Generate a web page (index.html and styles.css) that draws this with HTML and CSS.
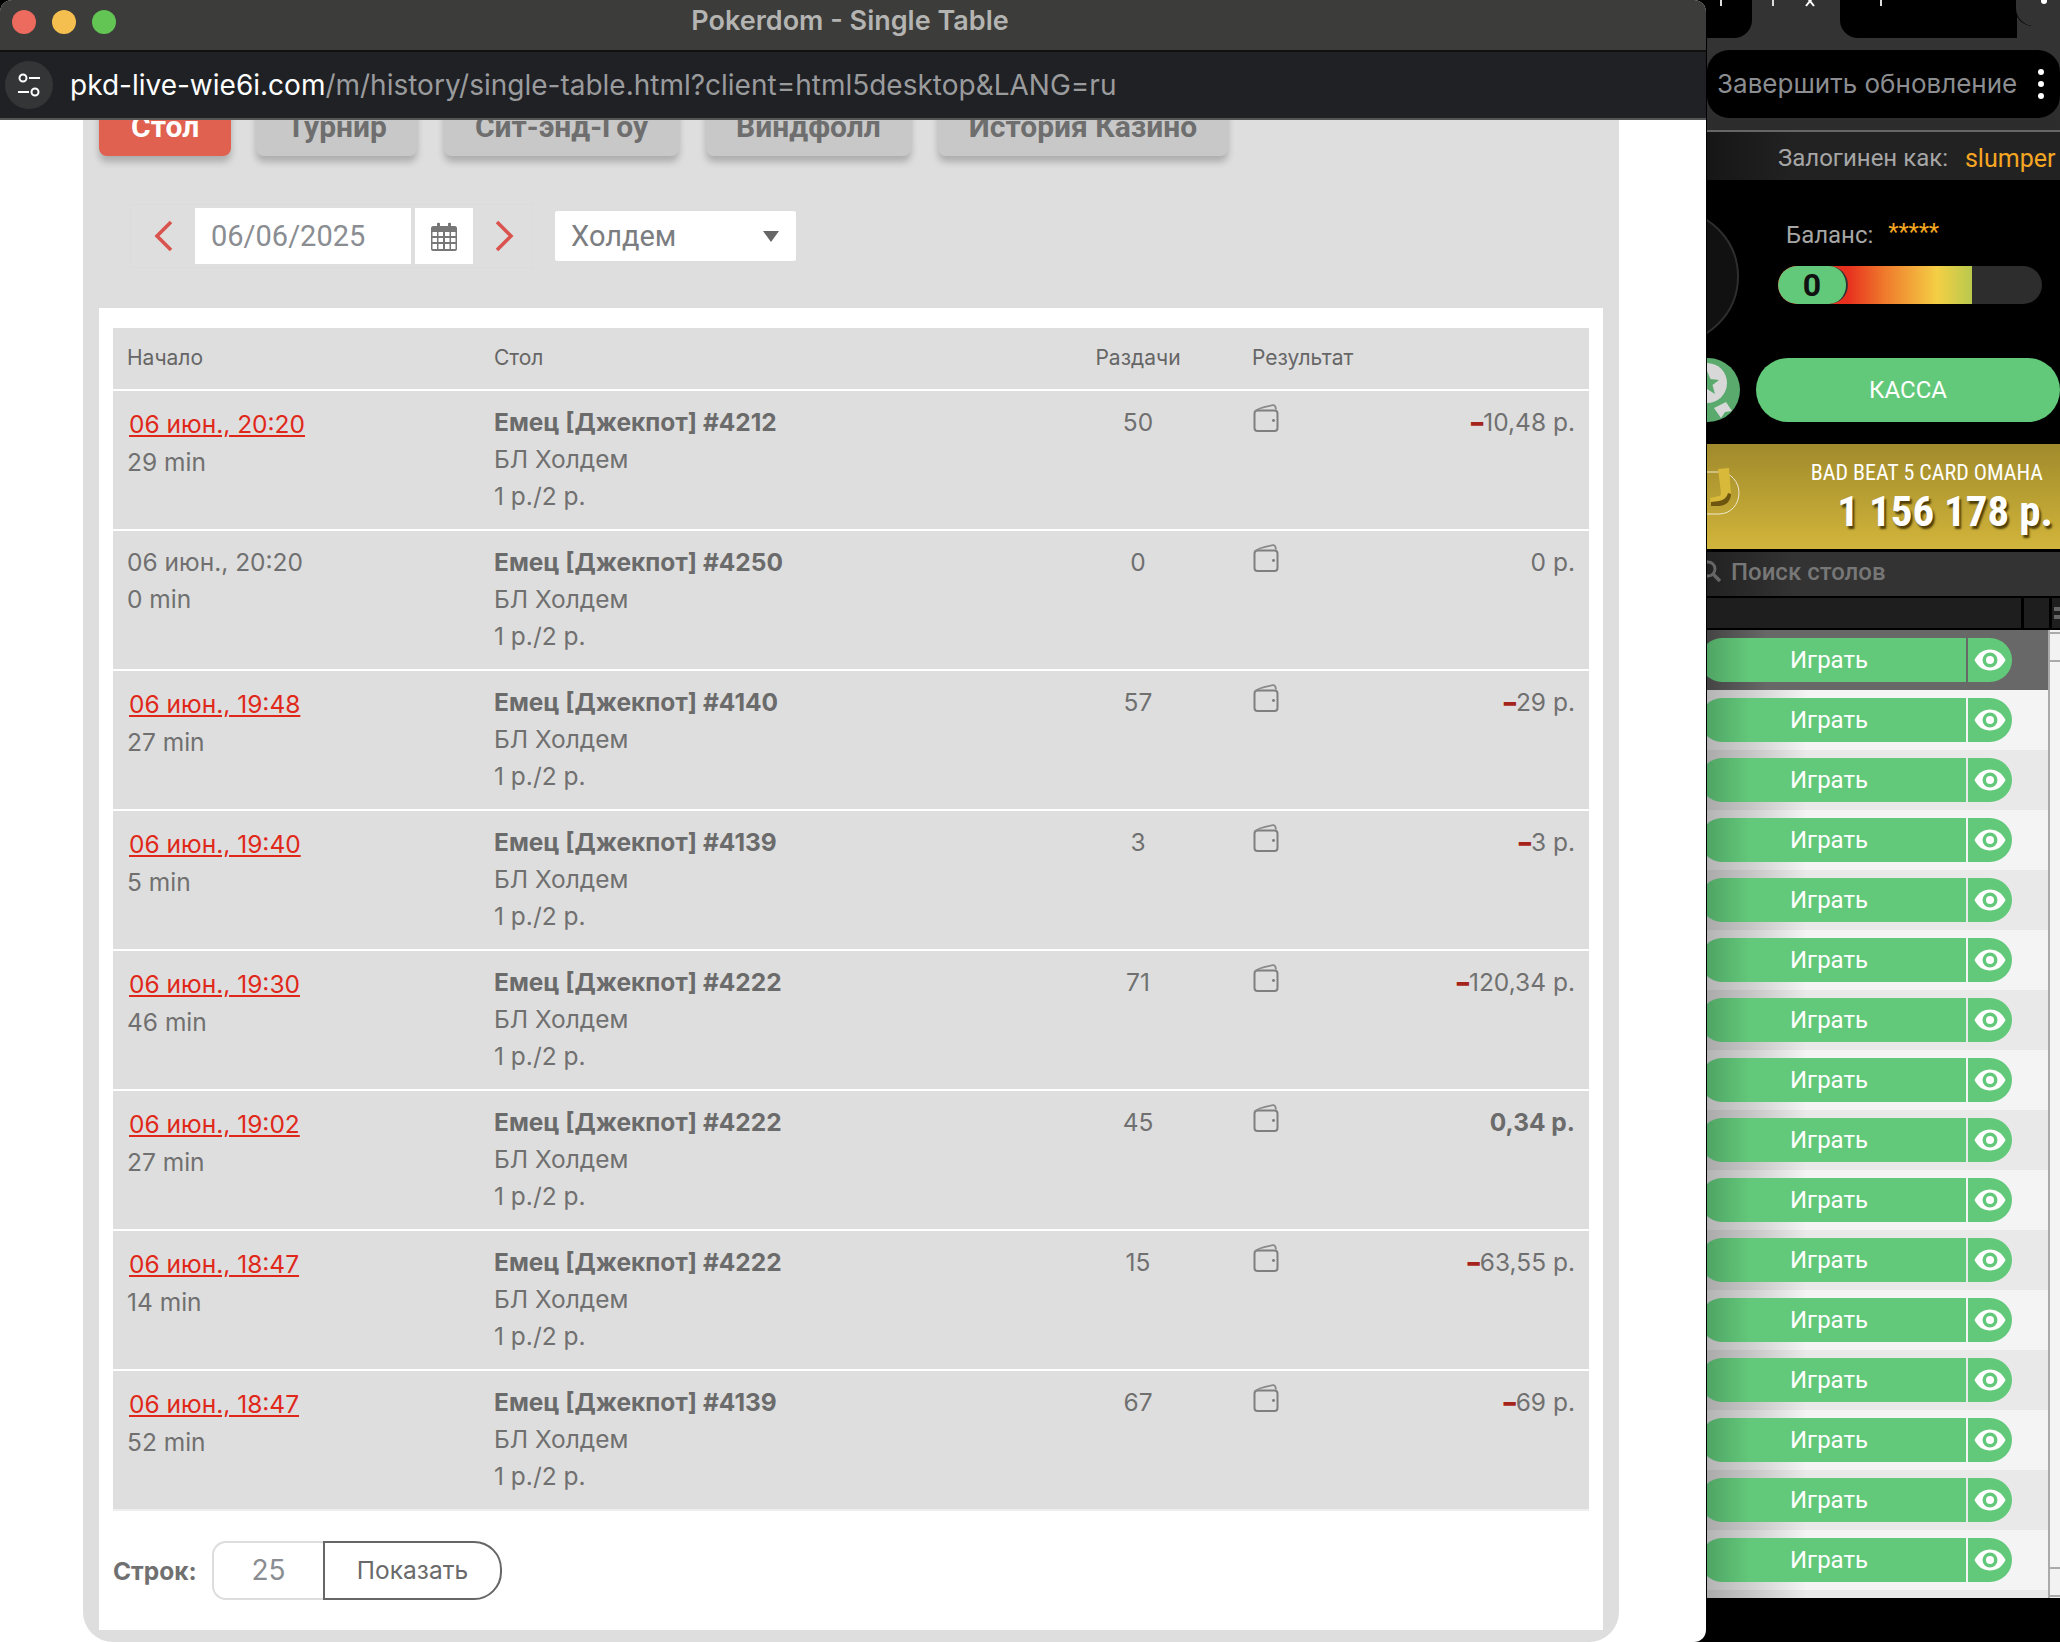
FILE: index.html
```html
<!DOCTYPE html>
<html lang="ru">
<head>
<meta charset="utf-8">
<title>Pokerdom - Single Table</title>
<link rel="stylesheet" href="styles.css">
</head>
<body>
<svg class="defs" width="0" height="0" aria-hidden="true">
  <symbol id="wallet" viewBox="1.5 0 26 28">
    <path d="M3 9.5C3 7.5 4 6.500 6 6.500H23C25 6.500 26 7.500 26 9.500V24C26 26 25 27 23 27H6C4 27 3 26 3 24Z" fill="none" stroke="#7f7f7f" stroke-width="2"/>
    <path d="M3.500 7.500C5 4.500 12 3 21.500 1.200C23 1 24 2 24.500 5.500" fill="none" stroke="#8a8a8a" stroke-width="1.800"/>
    <circle cx="22" cy="16.500" r="1.400" fill="#777"/>
  </symbol>
  <symbol id="eye" viewBox="0 0 32 22">
    <path d="M0.500 11C4 4 9.500 0.500 16 0.500S28 4 31.500 11C28 18 22.500 21.500 16 21.500S4 18 0.500 11Z" fill="#fff"/>
    <circle cx="16" cy="11" r="7.500" fill="#63c97a"/>
    <circle cx="16" cy="11" r="4" fill="#fff"/>
  </symbol>
</svg>
<div class="screen">
  <div class="window">
    <header class="chrome">
      <div class="titlebar">
        <span class="light light-red"></span>
        <span class="light light-yellow"></span>
        <span class="light light-green"></span>
        <span class="title">Pokerdom - Single Table</span>
      </div>
      <div class="urlbar">
        <span class="site-icon">
          <svg width="26" height="26" viewBox="0 0 26 26"><circle cx="7" cy="6" r="3.500" fill="none" stroke="#fff" stroke-width="2"/><path d="M13 6H24M2 20H13" stroke="#fff" stroke-width="2.200"/><circle cx="19" cy="20" r="3.500" fill="none" stroke="#fff" stroke-width="2"/></svg>
        </span>
        <span class="url"><span class="url-host">pkd-live-wie6i.com</span>/m/history/single-table.html?client=html5desktop&amp;LANG=ru</span>
      </div>
    </header>
    <main class="main">
      <div class="panel">
        <nav class="tabs">
          <a class="tab tab-active">Стол</a>
          <a class="tab">Турнир</a>
          <a class="tab">Сит-энд-Гоу</a>
          <a class="tab">Виндфолл</a>
          <a class="tab">История Казино</a>
        </nav>
        <div class="filters">
          <div class="date-group">
            <svg class="chev" width="19" height="32" viewBox="0 0 19 32"><path d="M17 2L3 16L17 30" fill="none" stroke="#d9534f" stroke-width="3.600"/></svg>
            <span class="date-input">06/06/2025</span>
            <span class="cal-btn">
              <svg width="26" height="29" viewBox="0 0 26 29"><path fill-rule="evenodd" d="M2 4H6V1.500C6 .5 9 .5 9 1.500V4H17V1.500C17 .5 20 .5 20 1.500V4H24C25 4 26 5 26 6V27C26 28 25 29 24 29H2C1 29 0 28 0 27V6C0 5 1 4 2 4ZM1.500 10V14H6V10ZM7.500 10V14H12V10ZM14 10V14H18.500V10ZM20 10V14H24.500V10ZM1.500 16V20H6V16ZM7.500 16V20H12V16ZM14 16V20H18.500V16ZM20 16V20H24.500V16ZM1.500 22V27H6V22ZM7.500 22V27H12V22ZM14 22V27H18.500V22ZM20 22V27H24.500V22Z" fill="#777"/></svg>
            </span>
            <svg class="chev chev-next" width="19" height="32" viewBox="0 0 19 32"><path d="M2 2L16 16L2 30" fill="none" stroke="#d9534f" stroke-width="3.600"/></svg>
          </div>
          <div class="select"><span>Холдем</span><i class="caret"></i></div>
        </div>
        <section class="sheet">
          <table class="history">
            <colgroup><col class="c1"><col class="c2"><col class="c3"><col class="c4"><col></colgroup>
            <thead>
              <tr><th>Начало</th><th>Стол</th><th class="center">Раздачи</th><th colspan="2">Результат</th></tr>
            </thead>
            <tbody>
              <tr><td><a class="link">06 июн., 20:20</a><div>29 min</div></td><td><b>Емец [Джекпот] #4212</b><div>БЛ Холдем</div><div>1 р./2 р.</div></td><td class="center">50</td><td><svg class="wallet"><use href="#wallet"/></svg></td><td class="amount"><span class="minus">–</span>10,48 р.</td></tr>
              <tr><td><div>06 июн., 20:20</div><div>0 min</div></td><td><b>Емец [Джекпот] #4250</b><div>БЛ Холдем</div><div>1 р./2 р.</div></td><td class="center">0</td><td><svg class="wallet"><use href="#wallet"/></svg></td><td class="amount">0 р.</td></tr>
              <tr><td><a class="link">06 июн., 19:48</a><div>27 min</div></td><td><b>Емец [Джекпот] #4140</b><div>БЛ Холдем</div><div>1 р./2 р.</div></td><td class="center">57</td><td><svg class="wallet"><use href="#wallet"/></svg></td><td class="amount"><span class="minus">–</span>29 р.</td></tr>
              <tr><td><a class="link">06 июн., 19:40</a><div>5 min</div></td><td><b>Емец [Джекпот] #4139</b><div>БЛ Холдем</div><div>1 р./2 р.</div></td><td class="center">3</td><td><svg class="wallet"><use href="#wallet"/></svg></td><td class="amount"><span class="minus">–</span>3 р.</td></tr>
              <tr><td><a class="link">06 июн., 19:30</a><div>46 min</div></td><td><b>Емец [Джекпот] #4222</b><div>БЛ Холдем</div><div>1 р./2 р.</div></td><td class="center">71</td><td><svg class="wallet"><use href="#wallet"/></svg></td><td class="amount"><span class="minus">–</span>120,34 р.</td></tr>
              <tr><td><a class="link">06 июн., 19:02</a><div>27 min</div></td><td><b>Емец [Джекпот] #4222</b><div>БЛ Холдем</div><div>1 р./2 р.</div></td><td class="center">45</td><td><svg class="wallet"><use href="#wallet"/></svg></td><td class="amount"><b>0,34 р.</b></td></tr>
              <tr><td><a class="link">06 июн., 18:47</a><div>14 min</div></td><td><b>Емец [Джекпот] #4222</b><div>БЛ Холдем</div><div>1 р./2 р.</div></td><td class="center">15</td><td><svg class="wallet"><use href="#wallet"/></svg></td><td class="amount"><span class="minus">–</span>63,55 р.</td></tr>
              <tr><td><a class="link">06 июн., 18:47</a><div>52 min</div></td><td><b>Емец [Джекпот] #4139</b><div>БЛ Холдем</div><div>1 р./2 р.</div></td><td class="center">67</td><td><svg class="wallet"><use href="#wallet"/></svg></td><td class="amount"><span class="minus">–</span>69 р.</td></tr>
            </tbody>
          </table>
          <div class="pager">
            <b class="pager-label">Строк:</b>
            <span class="pager-input">25</span>
            <span class="pager-btn">Показать</span>
          </div>
        </section>
      </div>
    </main>
  </div>
  <aside class="lobby">
    <div class="strip">
      <div class="strip-tab strip-tab-a"><i class="tick"></i></div>
      <div class="strip-gap"><i class="tick"></i><svg class="close" width="16" height="7" viewBox="0 0 16 7"><path d="M4 -4L12 6M12 -4L4 6" stroke="#fff" stroke-width="2"/></svg></div>
      <div class="strip-tab strip-tab-b"><i class="tick"></i></div>
      <div class="strip-small"><i class="tick tick-short"></i></div>
    </div>
    <div class="update-wrap">
      <div class="update"><span>Завершить обновление</span><span class="dots"><i></i><i></i><i></i></span></div>
    </div>
    <div class="user-bar"><span>Залогинен как:</span><span class="user-name">slumper</span></div>
    <div class="account">
      <div class="avatar"></div>
      <div class="balance-line"><span>Баланс:</span><span class="stars">*****</span></div>
      <div class="meter"><span class="meter-fill"></span><span class="meter-num">0</span></div>
    </div>
    <div class="cash-row">
      <span class="reward">
        <svg width="34" height="64" viewBox="0 0 34 64"><circle cx="0" cy="25" r="20" fill="#d8d8d8"/><path d="M0 13L3.500 21L12 22L5.500 27L8 36L0 31Z" fill="#5aaa6e"/><path d="M7 50L19 44L25 53L18 54L14 60Z" fill="#d8d8d8"/></svg>
      </span>
      <span class="cash">КАССА</span>
    </div>
    <div class="jackpot">
      <svg class="jp-logo" width="36" height="60" viewBox="0 0 36 60"><path d="M0 4H12C24 4 32 14 32 25S24 46 12 46H0" fill="none" stroke="#f0ead0" stroke-width="1"/><path d="M11 1L22 0L24 26C24 33 19 38 12 38H4L3 30L12 28C13 28 14 27 14 25Z" fill="#d9b93a"/><path d="M4 34L12 33C17 32 20 29 21 25L24 26C24 33 19 38 12 38H4Z" fill="#6d5510"/></svg>
      <div class="jp-title">BAD BEAT 5 CARD OMAHA</div>
      <div class="jp-sum">1 156 178 р.</div>
    </div>
    <div class="search">
      <svg class="search-icon" width="14" height="24" viewBox="0 0 14 24"><circle cx="1" cy="9" r="7" fill="none" stroke="#666" stroke-width="3"/><path d="M6 14L13 21" stroke="#666" stroke-width="3.500"/></svg>
      <span>Поиск столов</span>
    </div>
    <div class="heads"><span class="head head-main"></span><span class="head head-mid"></span><span class="head head-last"><i></i><i></i></span></div>
    <div class="list-wrap">
      <div class="list">
        <div class="row row-current"><span class="play">Играть</span><span class="watch"><svg class="eye"><use href="#eye"/></svg></span></div>
        <div class="row"><span class="play">Играть</span><span class="watch"><svg class="eye"><use href="#eye"/></svg></span></div>
        <div class="row"><span class="play">Играть</span><span class="watch"><svg class="eye"><use href="#eye"/></svg></span></div>
        <div class="row"><span class="play">Играть</span><span class="watch"><svg class="eye"><use href="#eye"/></svg></span></div>
        <div class="row"><span class="play">Играть</span><span class="watch"><svg class="eye"><use href="#eye"/></svg></span></div>
        <div class="row"><span class="play">Играть</span><span class="watch"><svg class="eye"><use href="#eye"/></svg></span></div>
        <div class="row"><span class="play">Играть</span><span class="watch"><svg class="eye"><use href="#eye"/></svg></span></div>
        <div class="row"><span class="play">Играть</span><span class="watch"><svg class="eye"><use href="#eye"/></svg></span></div>
        <div class="row"><span class="play">Играть</span><span class="watch"><svg class="eye"><use href="#eye"/></svg></span></div>
        <div class="row"><span class="play">Играть</span><span class="watch"><svg class="eye"><use href="#eye"/></svg></span></div>
        <div class="row"><span class="play">Играть</span><span class="watch"><svg class="eye"><use href="#eye"/></svg></span></div>
        <div class="row"><span class="play">Играть</span><span class="watch"><svg class="eye"><use href="#eye"/></svg></span></div>
        <div class="row"><span class="play">Играть</span><span class="watch"><svg class="eye"><use href="#eye"/></svg></span></div>
        <div class="row"><span class="play">Играть</span><span class="watch"><svg class="eye"><use href="#eye"/></svg></span></div>
        <div class="row"><span class="play">Играть</span><span class="watch"><svg class="eye"><use href="#eye"/></svg></span></div>
        <div class="row"><span class="play">Играть</span><span class="watch"><svg class="eye"><use href="#eye"/></svg></span></div>
        <div class="row row-cut"></div>
      </div>
      <div class="scrollbar"><span class="sb-btn sb-up"></span><span class="sb-track"></span><span class="sb-btn sb-down"></span></div>
    </div>
  </aside>
</div>
</body>
</html>
```
FILE: styles.css
```css
* { box-sizing: border-box; }
html, body { margin: 0; padding: 0; background: #000; }
body { font-family: Roboto, "Noto Sans", sans-serif; width: 2060px; height: 1642px; overflow: hidden; }
.defs { position: absolute; }
.screen { display: flex; width: 2060px; height: 1642px; }

/* browser window */
.window { width: 1706px; height: 1642px; display: flex; flex-direction: column; background: #fff; border-radius: 12px 12px 12px 0; overflow: hidden; }
.chrome { flex: none; }
.titlebar { height: 52px; background: #3c3c3a; border-bottom: 2px solid #111; display: flex; align-items: center; padding-left: 12px; gap: 16px; position: relative; padding-bottom: 6px; }
.light { width: 24px; height: 24px; border-radius: 50%; }
.light-red { background: #ed6a5e; }
.light-yellow { background: #f5bf4f; }
.light-green { background: #62c554; }
.title { position: absolute; left: 0; right: 6px; top: 6px; text-align: center; color: #b4b4b2; font: 600 27px/30px Inter, sans-serif; }
.urlbar { height: 68px; background: #202125; border-bottom: 2px solid #555; display: flex; align-items: center; padding-left: 5px; gap: 17px; }
.site-icon { width: 48px; height: 48px; border-radius: 50%; background: #343537; display: flex; align-items: center; justify-content: center; }
.url { color: #9a9b9d; font: 400 28px/34px Inter, sans-serif; white-space: nowrap; }
.url-host { color: #fff; }

.main { flex: 1; overflow: hidden; display: flex; }
.panel { flex: 1; margin: -42px 87px 0 83px; padding: 20px 16px 12px; background: #dedede; border-radius: 0 0 30px 30px; display: flex; flex-direction: column; }
.tabs { display: flex; gap: 27px; height: 58px; flex: none; }
.tab { height: 58px; padding: 0 30.5px; background: #c8c8c8; color: #6e6e6e; font-size: 30px; font-weight: 700; line-height: 58px; border-radius: 8px; box-shadow: 0 6px 7px rgba(0,0,0,.22); white-space: nowrap; }
.tab-active { background: #e06150; color: #fff; padding: 0 32px; margin-right: -2px; }

.filters { display: flex; align-items: center; gap: 22px; margin: 48px 0 0 31px; flex: none; }
.date-group { display: flex; align-items: center; height: 64px; padding: 0 18px 0 23px; border: 1px solid #dadbdf; }
.date-input { width: 216px; height: 56px; margin-left: 22px; padding-left: 16px; background: #fff; color: #8a8d91; font-size: 29px; line-height: 56px; }
.cal-btn { width: 58px; height: 56px; margin-left: 4px; background: #fff; display: flex; align-items: center; justify-content: center; }
.chev-next { margin-left: 22px; }
.select { width: 241px; height: 50px; background: #fff; color: #7b7d80; font-size: 29px; line-height: 50px; padding: 0 15px 0 16px; display: flex; justify-content: space-between; align-items: center; border-radius: 2px; }
.caret { width: 0; height: 0; border: 8px solid transparent; border-top: 11px solid #666; border-bottom: 0; margin-right: 2px; }

.sheet { flex: 1; margin-top: 40px; background: #fff; padding: 20px 14px 0; }
.history { width: 1476px; border-collapse: collapse; table-layout: fixed; background: #dedede; color: #707070; font-family: Inter, sans-serif; font-size: 24.5px; }
.c1 { width: 367px; } .c2 { width: 558px; } .c3 { width: 200px; } .c4 { width: 120px; }
.history th { height: 62px; padding: 0 14px 2px; font-size: 21px; font-weight: 400; color: #666; text-align: left; border-bottom: 2px solid #fff; }
.history td { height: 140px; padding: 13px 14px 0; vertical-align: top; line-height: 37px; border-bottom: 2px solid #fff; }
.history tr:last-child td { border-bottom: 2px solid #eee; }
.history b { font-weight: 700; color: #6b6b6b; }
.history .center { text-align: center; }
.link { display: block; margin: 2px 0 1px 2px; color: #e0281a; text-decoration: underline; }
.wallet { display: block; width: 28px; height: 28px; }
.amount { text-align: right; }
.minus { color: #a5231a; font-weight: 900; }

.pager { display: flex; align-items: center; padding-top: 30px; height: 89px; font-family: Inter, sans-serif; }
.pager-label { width: 99px; font-size: 24.5px; color: #707070; }
.pager-input { width: 111px; height: 59px; border: 2px solid #ddd; border-right: 0; border-radius: 14px 0 0 14px; color: #8a8d91; font-size: 28px; line-height: 55px; text-align: center; }
.pager-btn { width: 179px; height: 59px; border: 2px solid #666; border-radius: 0 28px 28px 0; color: #6a6a6a; font-size: 24.5px; line-height: 55px; text-align: center; }

/* lobby behind the window */
.lobby { width: 354px; height: 1642px; display: flex; flex-direction: column; overflow: hidden; background: #000; font-family: Roboto, sans-serif; border-left: 1px solid #000; }
.strip { flex: none; height: 50px; background: #333; display: flex; align-items: flex-start; overflow: hidden; }
.strip-tab { height: 38px; background: #000; }
.strip-tab-a { width: 45px; border-radius: 0 0 18px 0; padding-left: 13px; }
.strip-gap { width: 88px; padding-left: 20px; display: flex; gap: 28px; align-items: flex-start; }
.strip-tab-b { width: 177px; border-radius: 0 0 0 18px; padding-left: 40px; }
.strip-small { flex: 1; height: 26px; background: #333; border-radius: 0 0 0 18px; margin-left: -1px; box-shadow: -1px 0 0 #000; padding-left: 25px; }
.tick { display: block; width: 2px; height: 6px; background: #ddd; }
.tick-short { height: 4px; width: 6px; border-radius: 0 0 3px 3px; background: #fff; }
.close { display: block; }
.update-wrap { flex: none; height: 82px; background: linear-gradient(#333, #2c2c2c); border-bottom: 2px solid #666; }
.update { height: 68px; background: #000; border-radius: 22px; display: flex; align-items: center; justify-content: space-between; padding: 0 16px 0 10px; color: #8b8d91; font: 400 26px/30px Inter, sans-serif; }
.dots { display: flex; flex-direction: column; gap: 6px; }
.dots i { width: 6px; height: 6px; border-radius: 50%; background: #fff; }
.user-bar { flex: none; height: 48px; padding-top: 4px; background: linear-gradient(90deg, #161616, #222 25%); display: flex; align-items: center; padding-left: 71px; gap: 17px; color: #a6a6a6; font-size: 24px; }
.user-name { color: #f5a623; font-size: 25px; }
.account { flex: none; height: 175px; position: relative; padding: 41px 0 0 79px; }
.avatar { position: absolute; left: -103px; top: 29px; width: 135px; height: 135px; border-radius: 50%; background: #111; border: 2px solid #2e2e2e; }
.balance-line { display: flex; gap: 15px; color: #a6a6a6; font-size: 24px; line-height: 28px; }
.stars { color: #f5a623; line-height: 22px; font-size: 24px; letter-spacing: -.2px; }
.meter { position: relative; margin: 17px 0 0 -8px; width: 264px; height: 38px; border-radius: 19px; background: #2d2d2d; overflow: hidden; }
.meter-fill { display: block; width: 194px; height: 38px; background: linear-gradient(90deg, #e8301f 36%, #ef7a2c 55%, #f4cf45 82%, #b9c94d 100%); }
.meter-num { position: absolute; left: 0; top: 0; width: 70px; height: 38px; border-radius: 19px; background: #63c97a; border-right: 2px solid #333; color: #111; font-size: 32px; font-weight: 700; line-height: 38px; text-align: center; }
.cash-row { flex: none; height: 89px; display: flex; align-items: flex-start; gap: 16px; padding-top: 3px; }
.reward { width: 33px; height: 64px; background: #5aaa6e; border-radius: 0 32px 32px 0; overflow: hidden; display: block; }
.reward svg { display: block; }
.cash { flex: 1; height: 64px; border-radius: 32px; background: #63c97a; color: #fff; font-size: 24px; line-height: 64px; text-align: center; }
.jackpot { flex: none; height: 108px; border-bottom: 3px solid #000; background: linear-gradient(#a08a2b, #d2b53b); position: relative; text-align: right; padding: 14px 7px 0 0; color: #fff; }
.jp-logo { position: absolute; left: 0; top: 24px; }
.jp-title { font: 400 22px/30px "Roboto Condensed", "Liberation Sans Narrow", Roboto, sans-serif; font-stretch: 75%; padding-right: 10px; }
.jp-sum { font: 700 43px/46px "Roboto Condensed", "Liberation Sans Narrow", Roboto, sans-serif; font-stretch: 75%; text-shadow: 2px 3px 2px rgba(60,45,0,.85); }
.search { flex: none; height: 46px; padding-bottom: 4px; background: linear-gradient(90deg, #222, #333 25%); border-bottom: 2px solid #000; display: flex; align-items: center; gap: 10px; color: #777; font-size: 24px; font-weight: 500; }
.search-icon { flex: none; }
.heads { flex: none; height: 32px; display: flex; gap: 3px; border-bottom: 2px solid #000; background: #000; }
.head { height: 30px; background: #1e1e1e; }
.head-main { width: 314px; }
.head-mid { width: 25px; }
.head-last { flex: 1; display: flex; flex-direction: column; gap: 4px; justify-content: center; align-items: flex-end; }
.head-last i { display: block; width: 6px; height: 4px; background: #666; }
.list-wrap { flex: none; height: 968px; display: flex; }
.list { width: 341px; overflow: hidden; }
.row { height: 60px; padding-top: 8px; display: flex; gap: 2px; align-items: flex-start; background: linear-gradient(90deg, #b4b4b4, transparent 100px), #f4f4f4; }
.row:nth-child(odd) { background: linear-gradient(90deg, #aaa, transparent 100px), #e9e9e9; }
.row-current, .row-current:nth-child(odd) { background: linear-gradient(90deg, #444, #686868 60px); }
.row-cut { height: 8px; padding: 0; }
.play { width: 266px; height: 44px; margin-left: -7px; border-radius: 22px 0 0 22px; background: linear-gradient(90deg, #4fa363 6px, #63c97a 50px); color: #fff; font-size: 24px; line-height: 44px; text-align: center; padding-right: 8px; }
.watch { width: 44px; height: 44px; border-radius: 0 22px 22px 0; background: #63c97a; display: flex; align-items: center; justify-content: center; padding-right: 1px; }
.eye { width: 32px; height: 22px; display: block; }
.scrollbar { width: 12px; height: 968px; display: flex; flex-direction: column; background: #f2f2f2; border-left: 2px solid #aaa; }
.sb-btn { flex: none; height: 30px; border-bottom: 2px solid #aaa; background: #f2f2f2; }
.sb-up { margin-top: 2px; border-top: 2px solid #aaa; }
.sb-track { flex: 1; background: #f4f4f4; }
.sb-down { border-top: 2px solid #aaa; margin-bottom: 1px; }
```
